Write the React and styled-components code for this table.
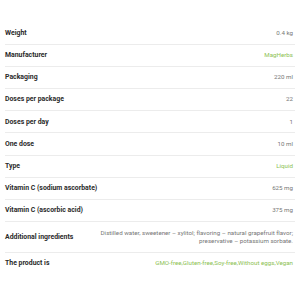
import React from "react";
import styled, { createGlobalStyle } from "styled-components";

const Global = createGlobalStyle`
  html, body { margin: 0; padding: 0; background: #fff; }
  body { font-family: Roboto, "Liberation Sans", Arial, sans-serif; }
`;

const Wrap = styled.div`
  padding: 22.5px 5px 0 5px;
  width: 290px;
`;

const Row = styled.div`
  display: flex;
  align-items: center;
  justify-content: space-between;
  padding: 6.4px 2px 6.4px 0;
  box-sizing: border-box;
  border-bottom: ${(p) => (p.$last ? "none" : "1px solid #ececec")};
`;

const Label = styled.div`
  flex: 0 0 auto;
  white-space: nowrap;
  font-size: 6.9px;
  line-height: 8.4px;
  font-weight: 700;
  color: #2a2a2a;
`;

const Value = styled.div`
  flex: 0 1 200px;
  text-align: right;
  font-size: 6.2px;
  line-height: 8.4px;
  color: ${(p) => (p.$green ? "#8cc152" : "#777")};
`;

const rows = [
  ["Weight", "0.4 kg"],
  ["Manufacturer", "MagHerbs", true],
  ["Packaging", "220 ml"],
  ["Doses per package", "22"],
  ["Doses per day", "1"],
  ["One dose", "10 ml"],
  ["Type", "Liquid", true],
  ["Vitamin C (sodium ascorbate)", "625 mg"],
  ["Vitamin C (ascorbic acid)", "375 mg"],
  [
    "Additional ingredients",
    <>
      Distilled water, sweetener – xylitol; flavoring – natural grapefruit flavor;
      <br />
      preservative – potassium sorbate.
    </>,
  ],
  ["The product is", "GMO-free,Gluten-free,Soy-free,Without eggs,Vegan", true],
];

export default function App() {
  return (
    <>
      <Global />
      <Wrap>
        {rows.map(([l, v, g], i) => (
          <Row key={i} $last={i === rows.length - 1}>
            <Label>{l}</Label>
            <Value $green={g}>{v}</Value>
          </Row>
        ))}
      </Wrap>
    </>
  );
}
